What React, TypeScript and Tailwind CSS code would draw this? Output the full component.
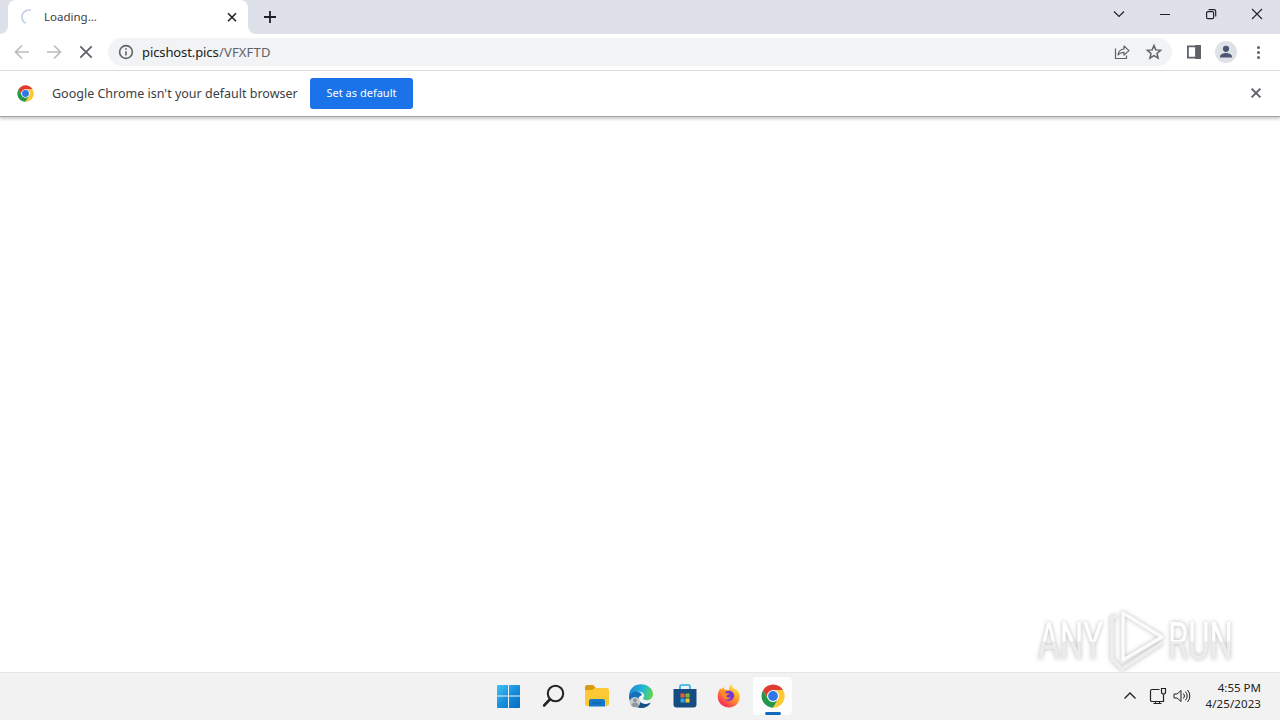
import type { ReactNode } from 'react';

type IconProps = { className?: string };

function ChromeLogo({ className }: IconProps) {
  return (
    <svg viewBox="0 0 48 48" className={className}>
      <circle cx="24" cy="24" r="23" fill="#fff" />
      <path d="M4 12.5A23.5 23.5 0 0 1 44.4 12.5H24A11.5 11.5 0 0 0 14 29.8Z" fill="#df3b30" />
      <path d="M44.4 12.5A23.5 23.5 0 0 1 24 47.5L34 29.8A11.5 11.5 0 0 0 24 12.5Z" fill="#fcc934" />
      <path d="M24 47.5A23.5 23.5 0 0 1 4 12.5L14 29.8A11.5 11.5 0 0 0 34 29.8Z" fill="#24984a" />
      <circle cx="24" cy="24" r="11.5" fill="#fff" />
      <circle cx="24" cy="24" r="9.8" fill="#3078e5" />
    </svg>
  );
}

function Stroke({ className, children, width = 1 }: IconProps & { children: ReactNode; width?: number }) {
  return (
    <svg viewBox="0 0 20 20" className={className} fill="none" stroke="currentColor" strokeWidth={width}>
      {children}
    </svg>
  );
}

function TabStrip() {
  return (
    <div className="flex h-[34px] bg-[#dee1e9] text-[#202124]">
      <div className="flex w-2 items-end overflow-hidden bg-white">
        <div className="h-full w-2 rounded-br-lg bg-[#dee1e9]" />
      </div>
      <div className="flex w-60 items-center rounded-t-lg bg-white pl-2.5">
        <Stroke className="h-5 w-5 text-[#bfcde8]" width={1.6}>
          <path d="M13 3.4A7 7 0 0 0 7.5 16.2" />
        </Stroke>
        <span className="ml-1.5 w-[178px] text-[11.5px] leading-4 text-[#3c4043]">Loading...</span>
        <Stroke className="h-5 w-5" width={1.6}>
          <path d="m6 6.2 8 8m0-8-8 8" />
        </Stroke>
      </div>
      <div className="w-2 bg-white">
        <div className="h-full rounded-bl-lg bg-[#dee1e9]" />
      </div>
      <div className="flex items-center pl-1">
        <Stroke className="h-5 w-5" width={1.8}>
          <path d="M4 10h12M10 4v12" />
        </Stroke>
      </div>
      <div className="ml-auto flex h-7 items-center gap-[26px] pr-[13px]">
        <Stroke className="h-5 w-5" width={1.2}>
          <path d="m5 7.5 5 5 5-5" />
        </Stroke>
        <Stroke className="h-5 w-5">
          <path d="M5 10.5h10" />
        </Stroke>
        <Stroke className="h-5 w-5" width={1.2}>
          <rect x="5.6" y="7.6" width="7" height="7" rx="1.2" />
          <path d="M7.6 5.6h5.3a1.8 1.8 0 0 1 1.8 1.8v5.2" />
        </Stroke>
        <Stroke className="h-5 w-5" width={1.1}>
          <path d="m5 5 10 10m0-10L5 15" />
        </Stroke>
      </div>
    </div>
  );
}

function Toolbar() {
  return (
    <div className="flex h-[37px] items-center border-b border-[#dfe0e2] bg-white text-[#5f6368]">
      <div className="flex w-[108px] gap-3 pl-3">
        <Stroke className="h-5 w-5 text-[#babcbe]" width={1.7}>
          <path d="M17 10H4m6-6.5L3.5 10l6.5 6.5" />
        </Stroke>
        <Stroke className="h-5 w-5 text-[#babcbe]" width={1.7}>
          <path d="M3 10h13m-6-6.5 6.5 6.5-6.5 6.5" />
        </Stroke>
        <Stroke className="h-5 w-5" width={1.8}>
          <path d="m4.3 4.3 11.4 11.4m0-11.4L4.3 15.7" />
        </Stroke>
      </div>
      <div className="flex h-7 w-[1064px] items-center rounded-full bg-[#f1f3f4] pl-2 pr-2">
        <Stroke className="h-5 w-5" width={1.6}>
          <circle cx="10" cy="10" r="6.4" />
          <path d="M10 9.2v4.3M10 6.2v1.6" />
        </Stroke>
        <div className="ml-1.5 flex text-[13px] leading-5">
          <span className="w-[77px] whitespace-nowrap tracking-[-0.1px] text-[#202124]">picshost.pics</span>
          <span className="tracking-[0.15px]">/VFXFTD</span>
        </div>
        <div className="ml-auto flex gap-3">
          <Stroke className="h-5 w-5" width={1.2}>
            <path d="M3.5 6.5v10h11v-3" />
            <path d="M6 13c.4-3.600 2.400-5.700 6-6V4l5 4.600-5 4.500v-2.800c-2.700 0-4.500.8-6 2.700Z" strokeLinejoin="round" />
          </Stroke>
          <Stroke className="h-5 w-5" width={1.5}>
            <path d="m10 3.500 1.800 4.400 4.800.4-3.600 3.100 1.100 4.700-4.100-2.500-4.100 2.500L7 11.400 3.400 8.300l4.800-.4Z" />
          </Stroke>
        </div>
      </div>
      <Stroke className="ml-3 h-5 w-5" width={1.8}>
        <path d="M3.900 4.400h12.200v11.200H3.900Z" />
        <path d="M12 4h4v12h-4Z" fill="currentColor" />
      </Stroke>
      <svg viewBox="0 0 22 22" className="ml-[11px] h-[22px] w-[22px]">
        <circle cx="11" cy="11" r="11" fill="#dee1e6" />
        <circle cx="11" cy="7.8" r="3.1" fill="#4c5674" />
        <path d="M5 16.500v-1c0-2 3.500-3.400 6-3.400s6 1.400 6 3.400v1Z" fill="#4c5674" />
      </svg>
      <svg viewBox="0 0 20 20" className="ml-[11px] h-5 w-5" fill="currentColor">
        <circle cx="10.5" cy="5.5" r="1.5" />
        <circle cx="10.5" cy="10.5" r="1.5" />
        <circle cx="10.5" cy="15.5" r="1.5" />
      </svg>
    </div>
  );
}

function InfoBar() {
  return (
    <div className="relative flex h-[46px] items-center border-b border-[#a5a5a5] bg-white pb-px pl-[17px] pr-3.5 text-[#3c4043] shadow-[0_2px_3px_rgba(0,0,0,0.22)]">
      <ChromeLogo className="h-[17px] w-[17px]" />
      <span className="ml-[18px] w-[258px] whitespace-nowrap pt-0.5 text-[12.5px]">Google Chrome isn't your default browser</span>
      <button className="mt-px h-[31px] w-[103px] rounded-[3px] bg-[#1a73e8] text-[11px] text-white">Set as default</button>
      <Stroke className="ml-auto h-5 w-5 text-[#5f6368]" width={2}>
        <path d="m5.6 5.6 8.8 8.8m0-8.8-8.8 8.8" />
      </Stroke>
    </div>
  );
}

function Watermark() {
  return (
    <svg
      viewBox="0 0 204 72"
      className="absolute bottom-0 left-[1036px] h-[72px] w-[204px] overflow-visible drop-shadow-[0_0_2px_rgba(0,0,0,0.28)]"
    >
      <defs>
        <linearGradient id="mark" x1="0" y1="22" x2="0" y2="60" gradientUnits="userSpaceOnUse">
          <stop offset="0.5" stopColor="#fff" />
          <stop offset="0.52" stopColor="#ececec" />
        </linearGradient>
      </defs>
      <g fill="url(#mark)" fontFamily="Roboto, sans-serif" fontSize="51">
        <text x="2" y="59" textLength="65" lengthAdjust="spacingAndGlyphs">ANY</text>
        <text x="132" y="59" textLength="65" lengthAdjust="spacingAndGlyphs">RUN</text>
      </g>
      <g fill="none" strokeWidth="3.5" strokeLinejoin="round">
        <path d="M81 17h-5v42l10 10 40-26" stroke="#eee" />
        <path d="M87 13v47l39-23Z" stroke="#fbfbfb" />
      </g>
    </svg>
  );
}

function WindowsLogo() {
  return (
    <svg viewBox="0 0 24 24" className="h-6 w-6">
      <defs>
        <linearGradient id="win" x1="0" y1="0" x2="24" y2="24" gradientUnits="userSpaceOnUse">
          <stop stopColor="#43c5f5" />
          <stop offset=".5" stopColor="#178fdd" />
          <stop offset="1" stopColor="#0669bd" />
        </linearGradient>
      </defs>
      <path d="M0 2a1 1 0 0 1 1-1h10v10.500H0Zm12-1h10a1 1 0 0 1 1 1v9.500H12ZM0 12.500h11V24H1a1 1 0 0 1-1-1Zm12 0h11V23a1 1 0 0 1-1 1H12Z" fill="url(#win)" />
    </svg>
  );
}

function EdgeLogo() {
  return (
    <svg viewBox="0 0 24 24" className="h-6 w-6">
      <defs>
        <linearGradient id="edge" x1="2" y1="5" x2="23" y2="12" gradientUnits="userSpaceOnUse">
          <stop stopColor="#188ed8" />
          <stop offset=".55" stopColor="#25bad0" />
          <stop offset="1" stopColor="#66d64c" />
        </linearGradient>
      </defs>
      <path d="M0 12C0 5 5.500.300 12 .300c6.800 0 12 4.500 12 9.700 0 4-3 6.300-6.200 6.300-2.600 0-4.400-1-3.500-2.200 2.200-3-.1-6.400-4-6.400C5.700 7.700 1 9 0 12Z" fill="url(#edge)" />
      <path d="M0 12c1-3.400 6.200-5.600 9.800-4 2.100.9 3 2 3.100 3.200-2.900.4-3.800 2.800-2.800 5.100 1.600 3.700 6.400 5.200 11.700 2.100C19.600 22 16 24 12 24 5.700 24-.5 18.500 0 12Z" fill="#1670bd" />
      <path d="M10 16.300c1.600 3.700 6.400 5.200 11.700 2.100-2.500 4.700-7.400 6-11 5-3-1.200-3.400-4.800-.7-7.100Z" fill="#174f86" />
      <circle cx="6" cy="18.2" r="5.3" fill="#c9cbcd" />
      <circle cx="6" cy="16.2" r="2" fill="#92959a" />
      <path d="M2.500 21.500c0-4 7-4 7 0-1.800 2-5.200 2-7 0Z" fill="#92959a" />
    </svg>
  );
}

function FirefoxLogo() {
  return (
    <svg viewBox="0 0 24 24" className="h-6 w-6">
      <defs>
        <linearGradient id="fox" x1="20" y1="2" x2="5" y2="22" gradientUnits="userSpaceOnUse">
          <stop stopColor="#fff04b" />
          <stop offset=".45" stopColor="#ff9c2a" />
          <stop offset="1" stopColor="#f5245d" />
        </linearGradient>
      </defs>
      <path d="M2.200 6.300 3.400 4l1 2L6.200 3l1.200 2.600c1.700-.4 3.500 0 5 .7-.8-2.600.4-4.700 2-6 .1 2.500 2 3.400 3.500 5.200l.6-1.100c3.500 2.600 4.800 6.100 4.200 9.600C21.800 20 17.400 23.500 12 23.500 5.400 23.500.7 18.700.7 12.300c0-2.200.5-4.200 1.500-6Z" fill="url(#fox)" />
      <path d="M7.500 9c1-2.500 6.300-3.400 8.500-.4 2.800 3.600.3 8.300-4 8.300-3.200 0-5-2-4.800-4.600Z" fill="#7b38d0" />
      <path d="M3.500 8.200c2-1.500 4.500-.8 5.200 1l3.500.2c-.1 1-1.800 1.600-2.900 2.100 0 2 2.200 2.800 4.300 1.600-.4 3.500-6.600 3.300-7.500-.4Z" fill="#ff8b25" />
    </svg>
  );
}

function Taskbar() {
  return (
    <div className="relative flex h-12 items-center border-t border-[#e5e5e5] bg-[#f2f2f2] pb-0.5">
      <div className="ml-[489px] flex items-center gap-[5px]">
        <div className="flex h-10 w-[39px] items-center justify-center"><WindowsLogo /></div>
        <div className="flex h-10 w-[39px] items-center justify-center">
          <svg viewBox="0 0 24 24" className="h-6 w-6" fill="none" stroke="#252525" strokeWidth="2.1">
            <circle cx="14.5" cy="9.5" r="7.7" />
            <path d="m9 15.200-5.800 6.200" strokeWidth="2.8" strokeLinecap="round" />
          </svg>
        </div>
        <div className="flex h-10 w-[39px] items-center justify-center">
          <svg viewBox="0 0 24 24" className="h-6 w-6">
            <path d="M0 3a2 2 0 0 1 2-2h6l3 3-2 3H0Z" fill="#d99b16" />
            <path d="M0 6h7l3-2h12a2 2 0 0 1 2 2v14a2 2 0 0 1-2 2H2a2 2 0 0 1-2-2Z" fill="#fbc934" />
            <path d="M4 22.500V17a2 2 0 0 1 2-2h12a2 2 0 0 1 2 2v5.500Z" fill="#1677c9" />
            <path d="M7.500 19h9" stroke="#0f64ad" strokeWidth="1.2" />
          </svg>
        </div>
        <div className="flex h-10 w-[39px] items-center justify-center"><EdgeLogo /></div>
        <div className="flex h-10 w-[39px] items-center justify-center">
          <svg viewBox="0 0 24 24" className="h-6 w-6">
            <path d="M7 5V2.500A1.500 1.500 0 0 1 8.500 1h7A1.500 1.500 0 0 1 17 2.500V5" fill="none" stroke="#29b1e7" strokeWidth="1.7" />
            <path d="M.5 5h23v15.500a3 3 0 0 1-3 3h-17a3 3 0 0 1-3-3Z" fill="#174c80" />
            <path d="M7.500 9.500h4v4h-4Z" fill="#f15b30" />
            <path d="M12.500 9.500h4v4h-4Z" fill="#81bb2b" />
            <path d="M7.500 14.500h4v4h-4Z" fill="#26a8e2" />
            <path d="M12.500 14.500h4v4h-4Z" fill="#fac52d" />
          </svg>
        </div>
        <div className="flex h-10 w-[39px] items-center justify-center"><FirefoxLogo /></div>
        <div className="relative flex h-[38px] w-[39px] items-center justify-center rounded bg-[#fdfdfd]">
          <ChromeLogo className="h-6 w-6" />
          <div className="absolute bottom-0 h-[3px] w-4 rounded-full bg-[#1269bc]" />
        </div>
      </div>
      <div className="ml-auto flex items-center pr-[19px] text-[#222]">
        <Stroke className="h-5 w-5" width={1.4}><path d="m4.500 12.500 5.500-5.500 5.500 5.500" /></Stroke>
        <Stroke className="ml-2 h-5 w-5" width={1.2}>
          <path d="M11.500 3.500H4A1.500 1.500 0 0 0 2.500 5v9A1.500 1.500 0 0 0 4 15.500h11.500V8.500M5.500 17.500h8M7.500 15.500v2M11.500 15.500v2" />
          <path d="M13.500 2.500h4V6a2 2 0 0 1-4 0Z" />
        </Stroke>
        <Stroke className="ml-1 h-5 w-5">
          <path d="M2 8v4h3l4 3.500v-11L5 8ZM11.500 7.500a4 4 0 0 1 0 5M13.500 5.700a6.500 6.500 0 0 1 0 8.600M15.500 4a9 9 0 0 1 0 12" />
        </Stroke>
        <div className="ml-[11px] w-[58px] whitespace-nowrap text-right text-[11.5px] leading-4">
          <div>4:55 PM</div>
          <div className="tracking-[0.1px]">4/25/2023</div>
        </div>
      </div>
    </div>
  );
}

export default function App() {
  return (
    <div className="flex h-screen w-screen flex-col overflow-hidden bg-white font-['Noto_Sans','Open_Sans',sans-serif]">
      <TabStrip />
      <Toolbar />
      <InfoBar />
      <main className="relative flex-1">
        <Watermark />
      </main>
      <Taskbar />
    </div>
  );
}
